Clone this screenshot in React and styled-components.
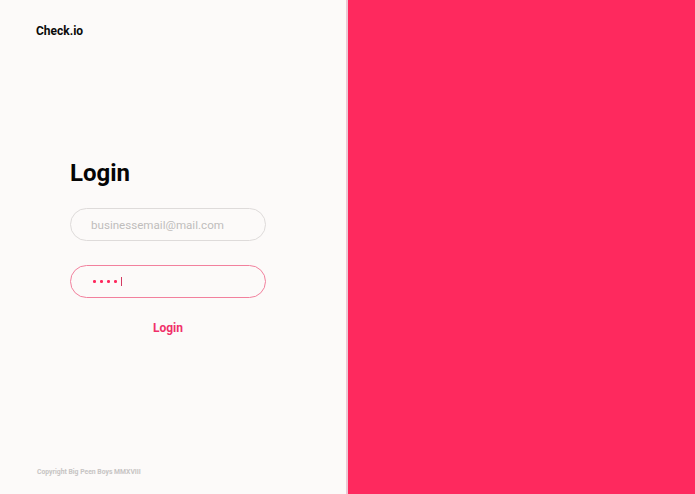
import React from 'react';
import styled, { createGlobalStyle } from 'styled-components';

const GlobalStyle = createGlobalStyle`
  html, body {
    margin: 0;
    padding: 0;
    height: 100%;
  }
  body {
    font-family: Roboto, "Liberation Sans", sans-serif;
  }
`;

const Page = styled.div`
  display: flex;
  width: 695px;
  height: 494px;
  overflow: hidden;
`;

const LeftPanel = styled.div`
  width: 348px;
  flex-shrink: 0;
  box-sizing: border-box;
  background: #fcfaf9;
  border-right: 2px solid #ebc9d5;
  display: flex;
  flex-direction: column;
`;

const RightPanel = styled.div`
  flex: 1;
  background: #fe295e;
`;

const Brand = styled.div`
  padding: 24px 0 0 36px;
  font-size: 12px;
  line-height: 14px;
  font-weight: 700;
  color: #0a0a0a;
`;

const Form = styled.form`
  display: flex;
  flex-direction: column;
  width: 196px;
  margin: 121px 0 0 70px;
`;

const Title = styled.h1`
  margin: 0 0 21px;
  font-size: 24px;
  line-height: 28px;
  font-weight: 700;
  color: #050505;
`;

const Field = styled.input`
  box-sizing: border-box;
  width: 196px;
  height: 33px;
  border-radius: 17px;
  border: 1px solid #dedbda;
  background: transparent;
  padding: 0 20px;
  font-family: inherit;
  font-size: 11.6px;
  color: #333;
  outline: none;
  margin-bottom: 24px;

  &::placeholder {
    color: #bfbdbc;
  }
`;

const PasswordBox = styled.div`
  box-sizing: border-box;
  width: 196px;
  height: 33px;
  border-radius: 17px;
  border: 1px solid #f2809d;
  padding: 0 0 0 22px;
  display: flex;
  align-items: center;
  gap: 4.5px;
`;

const Dot = styled.span`
  width: 2.5px;
  height: 2.5px;
  border-radius: 50%;
  background: #fe295e;
`;

const Caret = styled.span`
  width: 1px;
  height: 9px;
  background: #d33a62;
`;

const SubmitButton = styled.button`
  align-self: center;
  margin-top: 23px;
  border: none;
  background: none;
  padding: 0;
  font-family: inherit;
  font-size: 12px;
  line-height: 14px;
  font-weight: 700;
  color: #f0306a;
  cursor: pointer;
`;

const Copyright = styled.div`
  margin-top: auto;
  padding: 0 0 18px 37px;
  font-size: 6.8px;
  font-weight: 700;
  color: #c6c4c3;
`;

export default function App() {
  return (
    <>
      <GlobalStyle />
      <Page>
        <LeftPanel>
          <Brand>Check.io</Brand>
          <Form onSubmit={e => e.preventDefault()}>
            <Title>Login</Title>
            <Field type="email" placeholder="businessemail@mail.com" />
            <PasswordBox>
              <Dot />
              <Dot />
              <Dot />
              <Dot />
              <Caret />
            </PasswordBox>
            <SubmitButton type="submit">Login</SubmitButton>
          </Form>
          <Copyright>Copyright Big Peen Boys MMXVIII</Copyright>
        </LeftPanel>
        <RightPanel />
      </Page>
    </>
  );
}
